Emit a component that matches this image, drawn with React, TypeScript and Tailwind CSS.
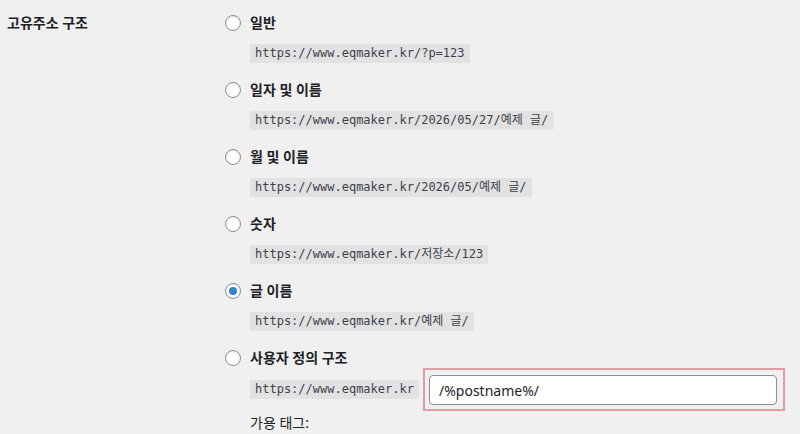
import React, { useState } from 'react';

type Option = {
  id: string;
  label: string;
  sample: string;
};

const options: Option[] = [
  { id: 'plain', label: '일반', sample: 'https://www.eqmaker.kr/?p=123' },
  { id: 'day', label: '일자 및 이름', sample: 'https://www.eqmaker.kr/2026/05/27/예제 글/' },
  { id: 'month', label: '월 및 이름', sample: 'https://www.eqmaker.kr/2026/05/예제 글/' },
  { id: 'numeric', label: '숫자', sample: 'https://www.eqmaker.kr/저장소/123' },
  { id: 'postname', label: '글 이름', sample: 'https://www.eqmaker.kr/예제 글/' },
];

// Radio circle, WP admin style
function Radio({ checked, onClick }: { checked: boolean; onClick: () => void }) {
  return (
    <button
      type="button"
      onClick={onClick}
      className="w-4 h-4 shrink-0 rounded-full border border-[#8c8f94] bg-white flex items-center justify-center shadow-[inset_0_1px_2px_rgba(0,0,0,0.1)]"
    >
      {checked && <span className="w-2 h-2 rounded-full bg-[#3582c4]" />}
    </button>
  );
}

function Code({ children }: { children: React.ReactNode }) {
  return (
    <code className="inline-block bg-[#e2e2e3] text-[#3c434a] px-[5px] h-[19px] leading-[19px] text-[12px] font-['DejaVu_Sans_Mono','Noto_Sans_CJK_KR',monospace] whitespace-pre">
      {children}
    </code>
  );
}

export default function App() {
  const [selected, setSelected] = useState('postname');
  const [custom, setCustom] = useState('/%postname%/');

  return (
    <div className="w-[800px] h-[434px] overflow-hidden bg-[#f0f0f1] text-[#1d2327] font-['Noto_Sans','Noto_Sans_CJK_KR',sans-serif] flex pt-[13px]">
      {/* Row heading */}
      <div className="w-[225px] shrink-0 pl-[7px] text-[14px] leading-[20px] font-semibold">
        고유주소 구조
      </div>

      {/* Choices */}
      <div className="flex flex-col">
        {options.map((opt) => (
          <div key={opt.id} className="flex flex-col h-[67px]">
            <div className="flex items-center gap-[9px] h-[20px]">
              <Radio checked={selected === opt.id} onClick={() => setSelected(opt.id)} />
              <span className="text-[14px] leading-[20px] font-semibold">{opt.label}</span>
            </div>
            <div className="pl-[25px] mt-[6px]">
              <Code>{opt.sample}</Code>
            </div>
          </div>
        ))}

        {/* Custom structure */}
        <div className="flex flex-col">
          <div className="flex items-center gap-[9px] h-[20px]">
            <Radio checked={selected === 'custom'} onClick={() => setSelected('custom')} />
            <span className="text-[14px] leading-[20px] font-semibold">사용자 정의 구조</span>
          </div>
          <div className="flex items-center pl-[25px]">
            <Code>https://www.eqmaker.kr</Code>
            <div className="ml-[4px] border-2 border-[#e29ca3] pl-[4px] pr-[6px] pt-[5px] pb-[4px]">
              <input
                type="text"
                value={custom}
                onChange={(e) => setCustom(e.target.value)}
                className="w-[348px] h-[30px] bg-white border border-[#8c8f94] rounded-[4px] px-[9px] text-[14px] text-[#1d2327] outline-none"
              />
            </div>
          </div>
          <div className="pl-[25px] mt-[2px] text-[14px] leading-[20px]">가용 태그:</div>
        </div>
      </div>
    </div>
  );
}
